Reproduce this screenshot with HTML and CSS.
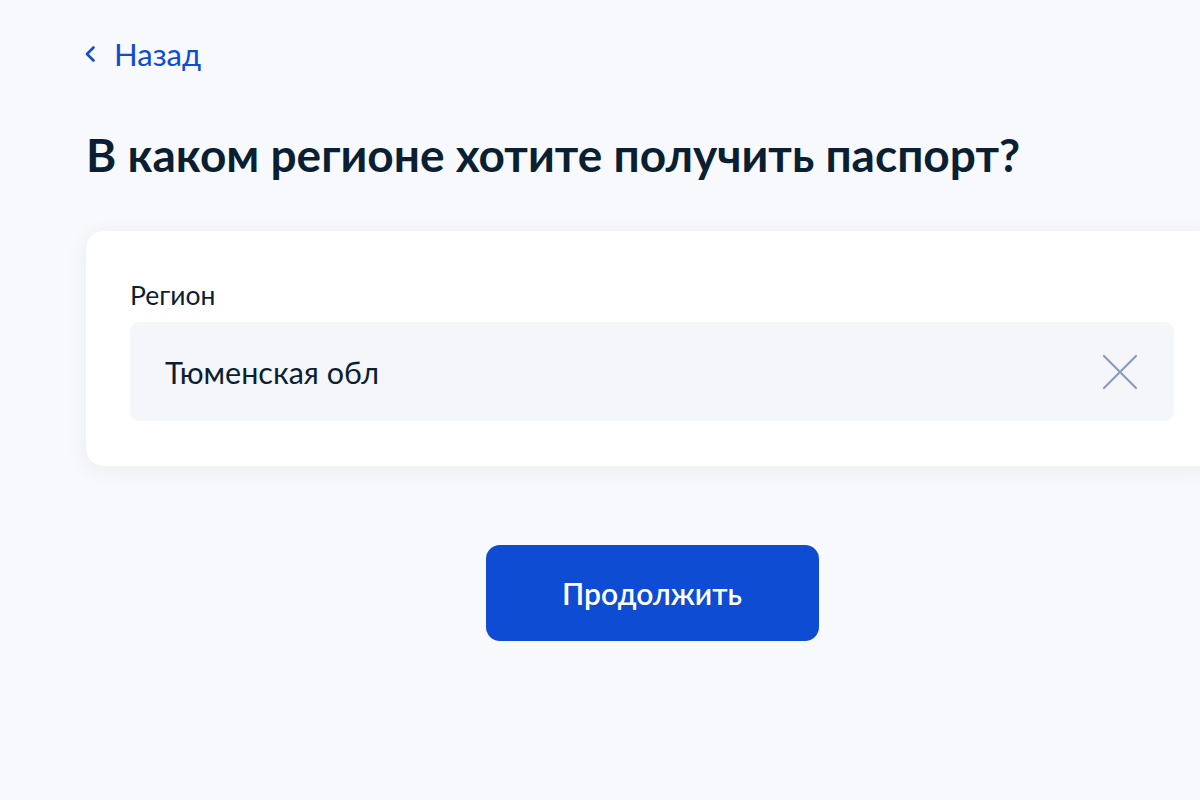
FILE: index.html
```html
<!DOCTYPE html>
<html lang="ru">
<head>
    <meta charset="UTF-8">
    <title>Регион</title>
    <link rel="stylesheet" href="styles.css">
</head>
<body>

<div class="page">
    <a class="back-link" href="#">
        <svg class="back-icon" width="14" height="22" viewBox="0 0 14 22">
            <path d="M10.5 4.5 L4 11 L10.5 17.5" fill="none" stroke="#0d4cd3" stroke-width="2.6" stroke-linecap="round" stroke-linejoin="round"/>
        </svg>
        <span>Назад</span>
    </a>

    <h1 class="title">В каком регионе хотите получить паспорт?</h1>

    <div class="card">
        <label class="field-label" for="region">Регион</label>
        <div class="field">
            <input type="text" id="region" value="Тюменская обл">
            <button type="button" class="clear-btn" aria-label="Очистить">
                <svg width="36" height="36" viewBox="0 0 36 36">
                    <path d="M2 2 L34 34 M34 2 L2 34" stroke="#8c9dbd" stroke-width="2.2" stroke-linecap="round"/>
                </svg>
            </button>
        </div>
    </div>

    <div class="actions">
        <button type="button" class="primary-btn">Продолжить</button>
    </div>
</div>

</body>
</html>
```

FILE: styles.css
```css
html, body {
    overflow: hidden;
}
body {
    margin: 0;
    background-color: #f8f9fc;
    font-family: Lato, "Noto Sans", sans-serif;
    color: #0b1f33;
}
.page {
    width: 1132px;
    margin-left: 86px;
    padding-top: 36px;
}
.back-link {
    display: inline-flex;
    align-items: center;
    gap: 17px;
    margin-left: -3px;
    color: #0d4cd3;
    font-size: 31px;
    text-decoration: none;
    line-height: 36px;
}
.title {
    margin: 55px 0 0;
    font-size: 46px;
    font-weight: 700;
    line-height: 56px;
}
.card {
    margin-top: 48px;
    background-color: #ffffff;
    border-radius: 18px;
    padding: 50px 44px 45px;
    box-shadow: 0 4px 24px rgba(11, 31, 51, 0.06);
}
.field-label {
    display: block;
    font-size: 26.5px;
    line-height: 28px;
    margin-bottom: 13px;
}
.field {
    display: flex;
    align-items: center;
    height: 99px;
    background-color: #f4f6f9;
    border-radius: 9px;
    padding: 0 36px 0 35px;
}
.field input {
    flex: 1;
    border: none;
    background: transparent;
    font-family: inherit;
    font-size: 30.5px;
    color: #0b1f33;
    padding: 0;
    outline: none;
}
.clear-btn {
    border: none;
    background: none;
    padding: 0;
    display: flex;
    cursor: pointer;
}
.actions {
    display: flex;
    justify-content: center;
    margin-top: 79px;
}
.primary-btn {
    width: 333px;
    height: 96px;
    border: none;
    border-radius: 14px;
    background-color: #0d4cd3;
    color: #ffffff;
    font-family: inherit;
    font-size: 30px;
    font-weight: 600;
    cursor: pointer;
}
```
